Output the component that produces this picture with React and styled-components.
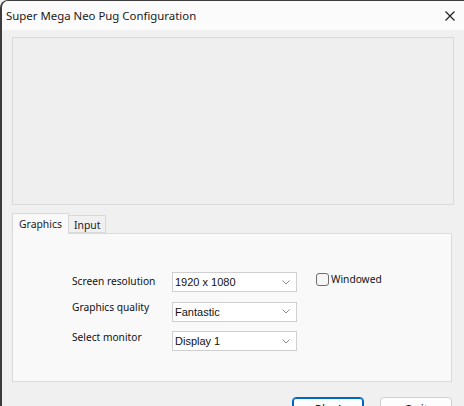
import React from "react";
import styled, { createGlobalStyle } from "styled-components";

const Global = createGlobalStyle`
  html, body { margin: 0; padding: 0; background: #f0f0f0; }
  body { font-family: "Noto Sans", "Liberation Sans", sans-serif; }
  #root { width: 464px; height: 406px; overflow: hidden; }
`;

const Window = styled.div`
  width: 470px;
  height: 420px;
  box-sizing: border-box;
  border-left: 2px solid #3c3c3c;
  border-top: 1px solid #3c3c3c;
  border-top-left-radius: 8px;
  overflow: hidden;
  display: flex;
  flex-direction: column;
  background: #f0f0f0;
`;

const TitleBar = styled.div`
  height: 29px;
  flex: none;
  display: flex;
  align-items: center;
  justify-content: space-between;
  padding: 0 15px 0 4px;
  background: #fbfbfb;
`;

const Title = styled.span`
  font-size: 11.4px;
  color: #1a1a1a;
`;

const Close = styled.svg`
  width: 10px;
  height: 10px;
  display: block;
`;

const Body = styled.div`
  flex: 1;
  display: flex;
  flex-direction: column;
  padding: 7px 16px 0 10px;
`;

const Preview = styled.div`
  height: 166px;
  border: 1px solid #dadada;
  background: #efefef;
`;

const TabStrip = styled.div`
  margin-top: 8px;
  height: 20px;
  display: flex;
  align-items: flex-end;
  margin-right: 2px;
  position: relative;
  z-index: 1;
`;

const Tab = styled.div`
  box-sizing: border-box;
  height: ${(p) => (p.$active ? "21px" : "18px")};
  margin-bottom: ${(p) => (p.$active ? "-1px" : "0")};
  padding: ${(p) => (p.$active ? "3px 6px 0 6px" : "2px 5px 0 5px")};
  border: 1px solid #d9d9d9;
  border-bottom: ${(p) => (p.$active ? "none" : "1px solid #d9d9d9")};
  border-left: ${(p) => (p.$first ? "1px solid #d9d9d9" : "none")};
  background: ${(p) => (p.$active ? "#f9f9f9" : "#f0f0f0")};
  font-size: 10.4px;
  color: #1a1a1a;
  line-height: 15px;
`;

const Panel = styled.div`
  height: 149px;
  margin-right: 2px;
  border: 1px solid #dcdcdc;
  background: #f9f9f9;
  box-sizing: border-box;
  padding: 38px 0 0 59px;
  display: flex;
  align-items: flex-start;
`;

const Form = styled.div`
  display: grid;
  grid-template-columns: 100px 125px;
  grid-auto-rows: 20px;
  row-gap: 9.5px;
  align-items: center;
`;

const Label = styled.span`
  font-size: 10.2px;
  color: #111;
  margin-bottom: ${(p) => p.$lift || 0}px;
`;

const Select = styled.div`
  box-sizing: border-box;
  height: 20px;
  border: 1px solid #cfcfcf;
  background: #ffffff;
  display: flex;
  align-items: center;
  justify-content: space-between;
  padding: 0 6px 0 2px;
  font-family: "Liberation Sans", sans-serif;
  font-size: 11px;
  color: #111;
`;

const Chevron = styled.svg`
  width: 8px;
  height: 5px;
  display: block;
`;

const CheckRow = styled.label`
  display: flex;
  align-items: center;
  gap: 2px;
  margin: 0 0 0 19px;
  font-size: 10.2px;
  color: #111;
`;

const Box = styled.span`
  box-sizing: border-box;
  width: 13px;
  height: 13px;
  border: 1px solid #6e6e6e;
  border-radius: 3px;
  background: #f6f6f6;
`;

const Buttons = styled.div`
  margin-top: 15px;
  margin-right: 2px;
  display: flex;
  justify-content: flex-end;
  gap: 16px;
`;

const Button = styled.button`
  box-sizing: border-box;
  width: 72px;
  height: 24px;
  border-radius: 4px;
  border: 1px solid ${(p) => (p.$default ? "#0067c0" : "#d0d0d0")};
  box-shadow: ${(p) => (p.$default ? "inset 0 0 0 1px #0067c0" : "none")};
  background: #fdfdfd;
  font-family: "Noto Sans", "Liberation Sans", sans-serif;
  font-size: 12px;
  color: #1a1a1a;
  padding: 3px 0 0;
  display: flex;
  justify-content: center;
  align-items: flex-start;
`;

const Dropdown = ({ value }) => (
  <Select>
    <span>{value}</span>
    <Chevron viewBox="0 0 8 5">
      <path d="M0.5 0.5 L4 4 L7.5 0.5" fill="none" stroke="#8a8a8a" strokeWidth="1" />
    </Chevron>
  </Select>
);

export default function App() {
  return (
    <>
      <Global />
      <Window>
        <TitleBar>
          <Title>Super Mega Neo Pug Configuration</Title>
          <Close viewBox="0 0 10 10">
            <path d="M0.5 0.5 L9.5 9.5 M9.5 0.5 L0.5 9.5" stroke="#1a1a1a" strokeWidth="1.1" />
          </Close>
        </TitleBar>
        <Body>
          <Preview />
          <TabStrip>
            <Tab $active $first>Graphics</Tab>
            <Tab>Input</Tab>
          </TabStrip>
          <Panel>
            <Form>
              <Label $lift={3}>Screen resolution</Label>
              <Dropdown value="1920 x 1080" />
              <Label $lift={9}>Graphics quality</Label>
              <Dropdown value="Fantastic" />
              <Label $lift={9}>Select monitor</Label>
              <Dropdown value="Display 1" />
            </Form>
            <CheckRow>
              <Box />
              Windowed
            </CheckRow>
          </Panel>
          <Buttons>
            <Button $default>Play!</Button>
            <Button>Quit</Button>
          </Buttons>
        </Body>
      </Window>
    </>
  );
}
